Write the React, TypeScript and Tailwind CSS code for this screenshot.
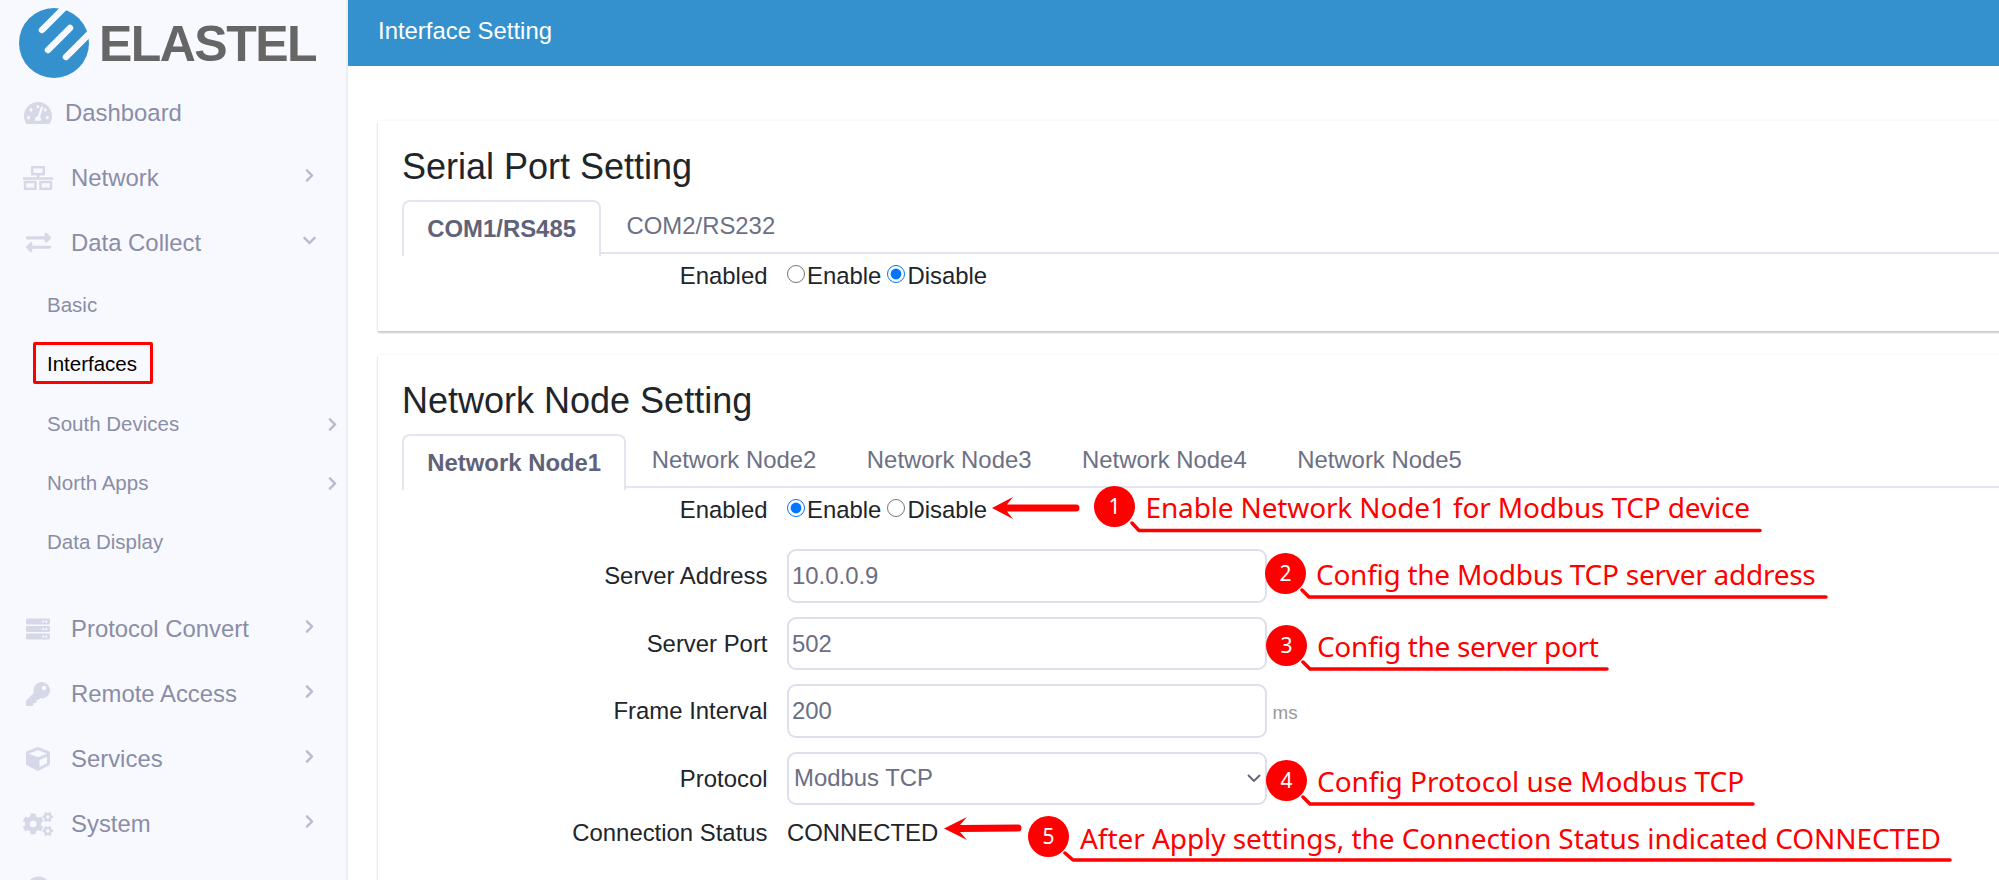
import type { ReactNode } from "react";
import {
  FaChevronDown,
  FaChevronRight,
  FaCogs,
  FaCube,
  FaExchangeAlt,
  FaKey,
  FaServer,
  FaTachometerAlt,
  FaUserCircle,
} from "react-icons/fa";

function Logo() {
  return (
    <div className="flex h-[80.3px] items-start">
      <svg width="100" height="80" viewBox="0 0 100 80" className="shrink-0">
        <circle cx="54" cy="43" r="35" fill="#3491cd" />
        <g stroke="#f8f9fe" strokeWidth="6.5" strokeLinecap="round">
          <line x1="42" y1="30" x2="68" y2="4" />
          <line x1="48" y1="50" x2="70" y2="28" />
          <line x1="66" y1="57" x2="95" y2="28" />
        </g>
      </svg>
      <span className="mt-[14px] -ml-[1px] text-[50px] leading-[60px] font-bold tracking-[-1.55px] text-[#666666]">
        ELASTEL
      </span>
    </div>
  );
}

function NetworkIcon() {
  return (
    <svg width="30" height="24" viewBox="0 0 30 24" fill="none" stroke="currentColor" strokeWidth="2.4">
      <rect x="9.200" y="1.200" width="11.600" height="7" />
      <path d="M15 8v5M0 12.500h30" />
      <rect x="2" y="16" width="10.500" height="6.800" />
      <rect x="17.500" y="16" width="10.500" height="6.800" />
    </svg>
  );
}

function NavItem({
  icon,
  label,
  open,
  arrow = true,
  gap = "gap-[18px]",
}: {
  icon: ReactNode;
  label: string;
  open?: boolean;
  arrow?: boolean;
  gap?: string;
}) {
  return (
    <div className={`flex h-[65px] items-center pr-[29.500px] pl-[23px] text-[23.9px] text-[#8a8da6] ${gap}`}>
      <span className="flex w-[30px] shrink-0 justify-center text-[#d6d8e7]">{icon}</span>
      <span className="flex-1">{label}</span>
      {arrow &&
        (open ? (
          <FaChevronDown size={15} className="-mt-[5px] text-[#b9bcd1]" />
        ) : (
          <FaChevronRight size={15} className="-mt-[5px] text-[#b9bcd1]" />
        ))}
    </div>
  );
}

function SubItem({ label, arrow, active }: { label: string; arrow?: boolean; active?: boolean }) {
  return (
    <div
      className={`flex h-[59.3px] items-center justify-between pr-[6px] pl-[47px] text-[20.5px] ${
        active ? "text-black" : "text-[#8a8da6]"
      }`}
    >
      <span>{label}</span>
      {arrow && <FaChevronRight size={15} className="text-[#b9bcd1]" />}
    </div>
  );
}

function Sidebar() {
  return (
    <aside className="h-[880px] w-[348px] shrink-0 overflow-hidden border-r-2 border-[#eceef6] bg-[#f8f9fe]">
      <Logo />
      <NavItem icon={<FaTachometerAlt size={28} />} label="Dashboard" arrow={false} gap="gap-[12px]" />
      <NavItem icon={<NetworkIcon />} label="Network" />
      <NavItem icon={<FaExchangeAlt size={25} />} label="Data Collect" open />
      <div className="mt-[0.6px]">
        <SubItem label="Basic" />
        <SubItem label="Interfaces" active />
        <SubItem label="South Devices" arrow />
        <SubItem label="North Apps" arrow />
        <SubItem label="Data Display" />
      </div>
      <div className="mt-[24px]">
        <NavItem icon={<FaServer size={24} />} label="Protocol Convert" />
        <NavItem icon={<FaKey size={24} />} label="Remote Access" />
        <NavItem icon={<FaCube size={24} />} label="Services" />
        <NavItem icon={<FaCogs size={30} />} label="System" />
        <NavItem icon={<FaUserCircle size={25} />} label="About Elastel" arrow={false} />
      </div>
    </aside>
  );
}

function Tabs({ items }: { items: string[] }) {
  return (
    <div className="flex h-[54px] border-b-2 border-[#e4e5f0] text-[23.9px]">
      {items.map((item, index) => (
        <div
          key={item}
          className={
            index === 0
              ? "-mb-[2px] flex h-[56px] items-center rounded-t-[8px] border-2 border-b-0 border-[#e4e5f0] bg-white px-[23.250px] font-bold text-[#5f6279]"
              : "flex items-center px-[25.250px] text-[#6d7085]"
          }
        >
          {item}
        </div>
      ))}
    </div>
  );
}

function Label({ children }: { children: ReactNode }) {
  return <div className="w-[365.500px] shrink-0 pt-[1px] text-right text-[#212529]">{children}</div>;
}

function RadioRow({ checked }: { checked: "Enable" | "Disable" }) {
  return (
    <div className="flex h-[45px] items-center gap-[19.500px] pb-[2px]">
      <Label>Enabled</Label>
      <div className="flex items-center pt-[1px] text-[#212529]">
        {["Enable", "Disable"].map((option, index) => (
          <label key={option} className={`flex items-center ${index === 1 ? "ml-[6px]" : ""}`}>
            <input
              type="radio"
              readOnly
              checked={checked === option}
              className="mr-[2px] -mt-[3px] h-[18px] w-[18px] accent-[#0075ff]"
            />
            {option}
          </label>
        ))}
      </div>
    </div>
  );
}

function InputRow({ label, value, unit }: { label: string; value: string; unit?: string }) {
  return (
    <div className="flex h-[53.5px] items-center gap-[19.500px]">
      <Label>{label}</Label>
      <input
        readOnly
        value={value}
        className="h-[53.5px] w-[480px] rounded-[9px] border-2 border-[#dedeec] bg-white px-[3px] pt-[1px] text-[#6b6e85]"
      />
      {unit && <span className="-ml-[14px] pt-[4px] text-[18.8px] text-[#999999]">{unit}</span>}
    </div>
  );
}

function SelectRow() {
  return (
    <div className="flex h-[53.5px] items-center gap-[19.500px]">
      <Label>Protocol</Label>
      <div className="relative">
        <select
          defaultValue="Modbus TCP"
          className="block h-[53.5px] w-[480px] appearance-none rounded-[9px] border-2 border-[#dedeec] bg-white pl-[5px] text-[#6b6e85]"
        >
          <option>Modbus TCP</option>
        </select>
        <svg
          width="14"
          height="9"
          viewBox="0 0 14 9"
          fill="none"
          stroke="#5f6279"
          strokeWidth="1.8"
          className="absolute top-[22px] right-[6px]"
        >
          <path d="M1 1l6 6 6-6" />
        </svg>
      </div>
    </div>
  );
}

function Card({ title, className, children }: { title: string; className: string; children: ReactNode }) {
  return (
    <section
      className={`w-[1700px] bg-white pl-[24px] shadow-[0_2px_2px_rgba(0,0,0,0.2),0_0_3px_rgba(0,0,0,0.07)] ${className}`}
    >
      <h2 className="pt-[23px] pb-[10px] text-[36px] leading-[46px] text-[#212529]">{title}</h2>
      {children}
    </section>
  );
}

const annotationText =
  "absolute text-[28px] leading-[36px] whitespace-nowrap text-[#ff0000] [font-family:'Noto_Sans',sans-serif]";
const badge =
  "absolute flex h-[41px] w-[41px] items-center justify-center rounded-full bg-[#ff0000] text-[21px] text-white [font-family:'Noto_Sans',sans-serif]";

function Annotations() {
  return (
    <div className="pointer-events-none absolute inset-0">
      <div className="absolute top-[342px] left-[33px] h-[42px] w-[120px] rounded-[2px] border-[3px] border-[#ff0000]" />
      <svg width="1999" height="880" className="absolute inset-0" fill="none">
        <g stroke="#ff0000" strokeWidth="3.5" strokeLinecap="round" strokeLinejoin="round">
          <path d="M1132 523 L1139 530.500 H1760" />
          <path d="M1302 590 L1309 597 H1826" />
          <path d="M1303 662 L1310 669 H1607" />
          <path d="M1303 797 L1310 804 H1753" />
          <path d="M1065 853 L1073 860 H1950" />
        </g>
        <path
          fill="#ff0000"
          d="M992 508 L1013 497 L1007 504.500 L1076 504.500 A3.500 3.500 0 0 1 1076 511.500 L1007 511.500 L1013 519 Z"
        />
        <path
          fill="#ff0000"
          d="M944 828.500 L967 817 L960 825 L1018 824.500 A3.500 3.500 0 0 1 1018 831.500 L960 832 L967 840 Z"
        />
      </svg>
      <div className={`${badge} top-[486px] left-[1094px]`}>1</div>
      <div className={`${badge} top-[553px] left-[1265px]`}>2</div>
      <div className={`${badge} top-[625px] left-[1266px]`}>3</div>
      <div className={`${badge} top-[760px] left-[1266px]`}>4</div>
      <div className={`${badge} top-[816px] left-[1028px]`}>5</div>
      <span className={`${annotationText} top-[489px] left-[1145.500px] tracking-[-0.15px]`}>
        Enable Network Node1 for Modbus TCP device
      </span>
      <span className={`${annotationText} top-[556px] left-[1316px] tracking-[-0.26px]`}>
        Config the Modbus TCP server address
      </span>
      <span className={`${annotationText} top-[628px] left-[1317px] tracking-[-0.35px]`}>Config the server port</span>
      <span className={`${annotationText} top-[763px] left-[1317px] tracking-[-0.04px]`}>
        Config Protocol use Modbus TCP
      </span>
      <span className={`${annotationText} top-[820px] left-[1080px] tracking-[-0.06px]`}>
        After Apply settings, the Connection Status indicated CONNECTED
      </span>
    </div>
  );
}

export default function App() {
  return (
    <div className="relative flex h-[880px] w-[1999px] overflow-hidden bg-white text-[23.9px] [font-family:'Liberation_Sans',Arial,sans-serif]">
      <Sidebar />
      <main className="min-w-0 flex-1">
        <header className="flex h-[66px] items-center bg-[#3491cd] pb-[4px] pl-[30px] text-white">
          Interface Setting
        </header>
        <div className="flex flex-col gap-[24px] pt-[55px] pl-[30px]">
          <Card title="Serial Port Setting" className="h-[210px]">
            <Tabs items={["COM1/RS485", "COM2/RS232"]} />
            <RadioRow checked="Disable" />
          </Card>
          <Card title="Network Node Setting" className="h-[540px]">
            <Tabs items={["Network Node1", "Network Node2", "Network Node3", "Network Node4", "Network Node5"]} />
            <RadioRow checked="Enable" />
            <div className="mt-[16px] flex flex-col gap-[14px]">
              <InputRow label="Server Address" value="10.0.0.9" />
              <InputRow label="Server Port" value="502" />
              <InputRow label="Frame Interval" value="200" unit="ms" />
              <SelectRow />
            </div>
            <div className="flex h-[54px] items-center gap-[19.500px]">
              <Label>Connection Status</Label>
              <span className="pt-[1px] text-[#212529]">CONNECTED</span>
            </div>
          </Card>
        </div>
      </main>
      <Annotations />
    </div>
  );
}
